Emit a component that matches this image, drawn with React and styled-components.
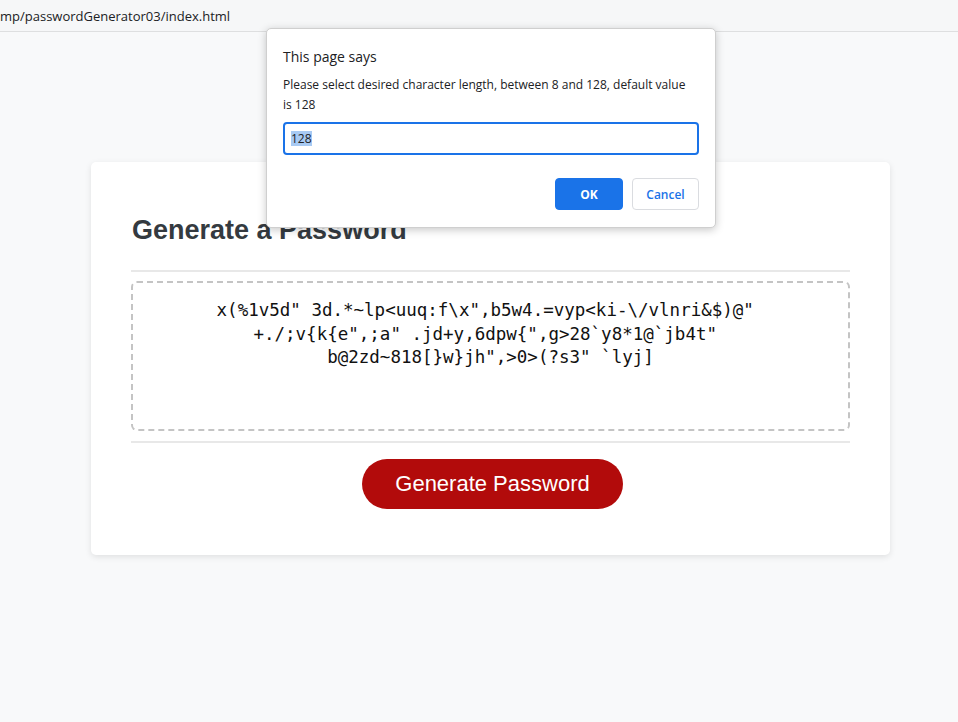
import React from "react";
import styled, { createGlobalStyle } from "styled-components";

const GlobalStyle = createGlobalStyle`
  html, body {
    margin: 0;
    width: 100%;
    height: 100%;
    background: #f8f9fa;
  }
  #root {
    min-height: 100%;
  }
`;

const Page = styled.div`
  position: relative;
  min-height: 722px;
  font-family: "Liberation Sans", Arial, sans-serif;
`;

const AddressBar = styled.div`
  height: 32px;
  box-sizing: border-box;
  display: flex;
  align-items: center;
  background: #f6f7f8;
  border-bottom: 1px solid #dedfe0;
  font-family: "Open Sans", "Noto Sans", sans-serif;
  font-size: 13px;
  color: #202124;
`;

const Card = styled.main`
  width: 799px;
  box-sizing: border-box;
  margin: 130px 0 0 91px;
  padding: 0 40px 46px;
  background: #fff;
  border-radius: 5px;
  box-shadow: 0 2px 6px rgba(0, 0, 0, 0.1);
`;

const Title = styled.h2`
  margin: 0;
  padding: 51px 0 23px 1px;
  font-size: 27px;
  font-weight: bold;
  line-height: 34px;
  color: #343a40;
  border-bottom: 2px solid #e8e8e8;
`;

const Output = styled.div`
  margin-top: 9px;
  height: 150px;
  box-sizing: border-box;
  padding: 16px 10px;
  border: 2px dashed #c4c4c4;
  border-radius: 6px;
  font-family: "DejaVu Sans Mono", "Liberation Mono", monospace;
  font-size: 17.5px;
  line-height: 23.5px;
  text-align: center;
  color: #111;
`;

const Line = styled.div`
  white-space: pre;
`;

const Footer = styled.div`
  margin-top: 10px;
  padding-top: 16px;
  border-top: 2px solid #e8e8e8;
  display: flex;
  justify-content: center;
`;

const BigButton = styled.button`
  width: 261px;
  height: 50px;
  margin-left: 4px;
  border: none;
  border-radius: 25px;
  background: #b20b0b;
  color: #fff;
  font-family: "Liberation Sans", Arial, sans-serif;
  font-size: 22px;
  cursor: pointer;
`;

const Dialog = styled.div`
  position: absolute;
  top: 28px;
  left: 266px;
  width: 450px;
  height: 200px;
  box-sizing: border-box;
  padding: 18px 16px 16px;
  background: #fff;
  border: 1px solid #cfcfcf;
  border-radius: 5px;
  box-shadow: 0 2px 8px rgba(0, 0, 0, 0.22);
  font-family: "Open Sans", "Noto Sans", sans-serif;
  color: #202124;
`;

const DialogTitle = styled.div`
  font-size: 14px;
  line-height: 20px;
  margin-bottom: 8px;
`;

const DialogText = styled.div`
  font-size: 12px;
  line-height: 20px;
  padding-right: 12px;
`;

const PromptInput = styled.div`
  margin-top: 7px;
  height: 33px;
  box-sizing: border-box;
  border: 2px solid #1a73e8;
  border-radius: 4px;
  display: flex;
  align-items: center;
  padding-left: 6px;
  font-size: 12px;
`;

const Selected = styled.span`
  background: #a8caf3;
  line-height: 15px;
`;

const Actions = styled.div`
  margin-top: 23px;
  display: flex;
  justify-content: flex-end;
  gap: 9px;
`;

const DialogButton = styled.button`
  width: ${p => (p.$primary ? "68px" : "67px")};
  height: 32px;
  box-sizing: border-box;
  border-radius: 4px;
  font-family: "Open Sans", "Noto Sans", sans-serif;
  font-size: 12px;
  font-weight: ${p => (p.$primary ? "bold" : "600")};
  border: 1px solid ${p => (p.$primary ? "#1a73e8" : "#dadce0")};
  background: ${p => (p.$primary ? "#1a73e8" : "#fff")};
  color: ${p => (p.$primary ? "#fff" : "#1a73e8")};
`;

// wrapped the way the textarea wraps it, trailing spaces kept
const password = [
  'x(%1v5d" 3d.*~lp<uuq:f\\x",b5w4.=vyp<ki-\\/vlnri&$)@" ',
  '+./;v{k{e",;a" .jd+y,6dpw{",g>28`y8*1@`jb4t" ',
  'b@2zd~818[}w}jh",>0>(?s3" `lyj]'
];

export default function App() {
  return (
    <Page>
      <GlobalStyle />
      <AddressBar>mp/passwordGenerator03/index.html</AddressBar>
      <Card>
        <Title>Generate a Password</Title>
        <Output>
          {password.map((line, i) => (
            <Line key={i}>{line}</Line>
          ))}
        </Output>
        <Footer>
          <BigButton>Generate Password</BigButton>
        </Footer>
      </Card>
      <Dialog>
        <DialogTitle>This page says</DialogTitle>
        <DialogText>
          Please select desired character length, between 8 and 128, default value is 128
        </DialogText>
        <PromptInput>
          <Selected>128</Selected>
        </PromptInput>
        <Actions>
          <DialogButton $primary>OK</DialogButton>
          <DialogButton>Cancel</DialogButton>
        </Actions>
      </Dialog>
    </Page>
  );
}
